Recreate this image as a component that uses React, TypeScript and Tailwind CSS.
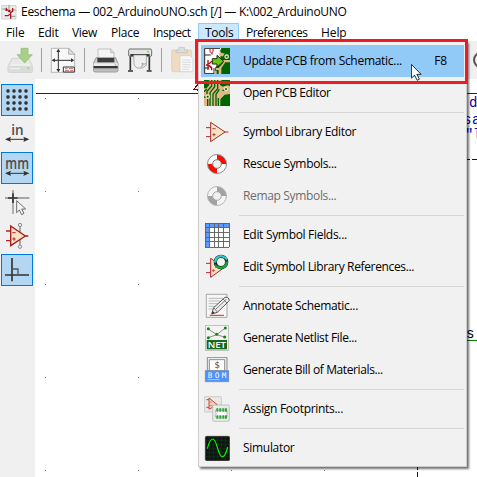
import React from "react";

type DrawProps = { view: string; children: React.ReactNode; big?: boolean; crisp?: boolean };

function Draw({ view, children, big, crisp }: DrawProps) {
  return (
    <svg
      viewBox={view}
      className={big ? "block size-[32px] shrink-0" : "block size-[26px] shrink-0"}
      fill="none"
      shapeRendering={crisp ? "crispEdges" : undefined}
    >
      {children}
    </svg>
  );
}

/* ---------- menu icons ---------- */

const UpdatePcb = () => (
  <Draw view="42 36 78 78">
    <path d="M42 36h54v78h-54z" fill="#fff" />
    <path d="M44 37v76h28M44 37h46M44 57h18M44 96h13M72 96v17" stroke="#222" strokeWidth="3" />
    <path d="M60 38v9q5 8 9 0v-9M66 50v6" stroke="#b00c14" strokeWidth="3" />
    <path d="M54 72v30M48 87h8M56 84l10-8M56 88l9 9v6M60 90l6 6" stroke="#b00c14" strokeWidth="4" />
    <path d="M94 36h26v78h-46l2-20 16-14-2-34z" fill="#006400" />
    <path d="M89 44l7 8h8l-5 9H87zM78 96h8l14-16v-8h20v7h-14L94 96v18h-8V102h-8z" fill="#deb887" />
    <path d="M74 104h6v10h-6z" fill="#deb887" />
    <circle cx="110" cy="62" r="5" fill="#006400" stroke="#f1dfbd" strokeWidth="4" />
    <path d="M67 68h14V58l20 18-20 18V84H67z" fill="#68c90a" stroke="#192b0c" strokeWidth="3" />
  </Draw>
);

const OpenPcb = () => (
  <Draw view="42 132 78 78">
    <path d="M42 132h78v78h-78z" fill="#deb887" />
    <path d="M42 132h16v15l-8 10h-8zM96 132h24v18l-8-2-14 4-8-5v-10zM120 174v36H91v-20l13-14z" fill="#006400" />
    <path d="M65 132v18L51 166v10M74 132v20L60 170v40M83 132v26L69 174v36M88 160l-10 15v35M42 167l8-8M97 163h8M53 186v24M42 183h6M85 186v24" stroke="#006400" strokeWidth="4" />
    <circle cx="108" cy="159" r="5" fill="#006400" stroke="#f1e2c4" strokeWidth="4" />
    <circle cx="53" cy="182" r="5" fill="#006400" stroke="#f1e2c4" strokeWidth="4" />
  </Draw>
);

const OpAmp = () => (
  <Draw view="27 12 78 78">
    <path d="M33 38h14M33 65h14M89 51h11" stroke="#b2222a" strokeWidth="3" />
    <path d="M47 22v58l43-29z" fill="#f7e3c4" stroke="#a52a2a" strokeWidth="3" />
    <path d="M52 41h10M52 59h10M57 54v10" stroke="#b2222a" strokeWidth="2.5" />
  </Draw>
);

const Buoy = ({ gray }: { gray?: boolean }) => {
  const c = gray ? "#a2a2a2" : "#ff0a00";
  const line = gray ? "#a9a9a9" : "#777";
  return (
    <Draw view="27 108 78 78">
      <circle cx="66" cy="147" r="28" fill={gray ? "#f4f4f4" : "#fff"} />
      <path d="M66 119a28 28 0 0 1 28 28H79A13 13 0 0 0 66 134zM66 175a28 28 0 0 1-28-28H53A13 13 0 0 0 66 160z" fill={c} />
      <circle cx="66" cy="147" r="28.5" stroke={line} strokeWidth="2.5" />
      <circle cx="66" cy="147" r="13" fill="#f0f0f0" stroke={line} strokeWidth="3" />
    </Draw>
  );
};

const Fields = () => (
  <Draw view="27 21 78 78" crisp>
    <path d="M31 25h71v71H31z" fill="#fff" />
    <path d="M31 25h71v12H31zM31 25h12v71H31z" fill="#5b98ff" />
    <path d="M31 25h71v71H31zM43 25v71M57 25v71M71 25v71M85 25v71M31 38h71M31 52h71M31 66h71M31 80h71" stroke="#606060" strokeWidth="2.8" />
  </Draw>
);

const References = () => (
  <Draw view="27 117 78 78">
    <path d="M33 145h14M33 173h14" stroke="#b2222a" strokeWidth="3" />
    <path d="M47 130v57l40-29z" fill="#f7e3c4" stroke="#b2222a" strokeWidth="3" />
    <path d="M50 167h10M55 162v10" stroke="#b2222a" strokeWidth="2" />
    <circle cx="78" cy="141" r="17" fill="#f2f2f2" stroke="#222" strokeWidth="10" />
    <path d="M61 143a17 17 0 0 1 28-15" stroke="#2cc9c5" strokeWidth="7" />
    <path d="M84 126h12v11z" fill="#2cc9c5" />
    <path d="M95 139a17 17 0 0 1-28 15" stroke="#13a83b" strokeWidth="7" />
    <path d="M61 146v13h12z" fill="#13a83b" />
  </Draw>
);

const Annotate = () => (
  <Draw view="27 234 78 78">
    <path d="M34 238h62v69H34z" fill="#f7f7f7" stroke="#999" strokeWidth="2.5" />
    <path d="M41 250h43M41 258h34M41 266h28M41 274h20M41 282h12" stroke="#aaa" strokeWidth="2.5" />
    <path d="M44 301h43" stroke="#ff1717" strokeWidth="3" />
    <path d="M50 297l6-19 34-31q7-3 12 5 2 4-1 7l-34 33z" fill="#eee" stroke="#555" strokeWidth="3" />
    <path d="M56 278l12 14M62 283l32-30M84 252l12 12" stroke="#666" strokeWidth="2.5" />
    <path d="M50 297l3-9 6 6z" fill="#333" />
  </Draw>
);

const Netlist = () => (
  <Draw view="27 15 78 78">
    <rect x="31" y="17" width="70" height="74" fill="#f3f3f1" stroke="#aaa" strokeWidth="2" />
    <path d="M40 27l25 17 26-20M40 53l25-9 23 7" stroke="#777" strokeWidth="2.5" />
    <g fill="#128018">
      <circle cx="40" cy="26" r="4.5" />
      <circle cx="91" cy="24" r="4.5" />
      <circle cx="65" cy="43" r="4.5" />
      <circle cx="40" cy="53" r="4.5" />
      <circle cx="89" cy="51" r="4.5" />
    </g>
    <path d="M35 60h61v28H35z" fill="#166b16" />
    <text x="38" y="84" fill="#fff" fontSize="28" fontWeight="600" textLength="55" lengthAdjust="spacingAndGlyphs" className="font-['Open_Sans',sans-serif]">NET</text>
  </Draw>
);

const Bom = () => (
  <Draw view="27 111 78 78">
    <path d="M37 112h59v42H37z" fill="#eee" stroke="#777" strokeWidth="2.5" />
    <path d="M43 119h46v34H43z" fill="#fff" stroke="#777" strokeWidth="2.5" />
    <text x="66" y="144" textAnchor="middle" fill="#444" fontSize="28" className="font-['DejaVu_Sans_Mono',monospace]">$</text>
    <path d="M31 152h70v33H31z" fill="#4f91fb" stroke="#667fa9" strokeWidth="2" />
    <text x="38" y="174" fill="#fff" fontSize="23" textLength="56" className="font-['DejaVu_Sans_Mono',monospace]">BOM</text>
    <path d="M38 179h35" stroke="#e0ebff" strokeWidth="2" />
  </Draw>
);

const Footprints = () => (
  <Draw view="27 228 78 78">
    <rect x="28" y="230" width="51" height="46" rx="2" fill="#e8e8e6" stroke="#bbb" strokeWidth="2" />
    <path d="M34 239h8M34 262h8M42 234v34l25-14z" fill="#f0d1b8" stroke="#c4493c" strokeWidth="3" />
    <path d="M44 246h6M44 257h8" stroke="#c4493c" strokeWidth="2" />
    <rect x="53" y="255" width="50" height="49" rx="4" fill="#e8ebe7" stroke="#aaa" strokeWidth="2" />
    <path d="M61 271h35v20H61v-6q7-4 0-8z" fill="#fff" stroke="#999" strokeWidth="2" />
    <path d="M67 265v10M76 265v10M85 265v10M93 265v10M67 286v10M76 286v10M85 286v10M93 286v10" stroke="#33a13c" strokeWidth="6" />
  </Draw>
);

const Simulator = () => (
  <Draw view="27 345 78 78">
    <rect x="31" y="349" width="73" height="73" rx="4" fill="#101513" stroke="#303333" strokeWidth="2" />
    <path d="M43 350v71M55 350v71M67 350v71M79 350v71M91 350v71M32 362h71M32 374h71M32 386h71M32 398h71M32 410h71" stroke="#153e1c" strokeWidth="1.5" />
    <path d="M37 386c6-23 11-29 16-29 14 0 15 53 29 53 7 0 12-12 16-29" stroke="#09f50d" strokeWidth="3.5" />
  </Draw>
);

/* ---------- top toolbar icons ---------- */

const Save = () => (
  <Draw view="21 144 78 78">
    <path d="M36 178h50l11 22v17q0 3-4 3H27q-3 0-3-4v-15z" fill="#e7e8e7" stroke="#c3c3c3" strokeWidth="2" />
    <path d="M26 200h69v18H26z" fill="#dadcd9" />
    <path d="M31 198h60M30 209h30" stroke="#f6f6f6" strokeWidth="3" />
    <circle cx="85" cy="208" r="3" fill="#9fcf8e" />
    <path d="M63 148h21v19h13l-23 25-23-25h12z" fill="#a7d087" stroke="#93b77b" strokeWidth="2" />
  </Draw>
);

const PageSetup = () => (
  <Draw view="150 144 78 78">
    <path d="M154 148h52l18 18v54h-70z" fill="#f8f8f8" stroke="#999" strokeWidth="2" />
    <path d="M206 148c1 8-2 14 0 18 7-1 12 1 18 0z" fill="#ddd" stroke="#999" strokeWidth="2" />
    <path d="M175 155v60M160 184h58" stroke="#333" strokeWidth="3" />
    <path d="M175 149l-6 10h12zM175 220l-6-10h12zM155 184l10-6v12zM223 184l-10-6v12z" fill="#333" />
    <path d="M190 204h33v15h-33z" fill="#fff" stroke="#333" strokeWidth="3" />
    <path d="M195 209h8m4 0h12M195 215h12m4 0h8" stroke="#a02020" strokeWidth="2" />
  </Draw>
);

const Printer = () => (
  <Draw view="279 144 78 78">
    <path d="M294 186v-36h38l10 10v26z" fill="#f4f4f4" stroke="#aaa" strokeWidth="2" />
    <path d="M332 150v11h10" fill="#ddd" stroke="#aaa" strokeWidth="2" />
    <path d="M288 176h59l7 18v20q0 5-6 5h-61q-7 0-7-6v-20z" fill="#ccc" stroke="#777" strokeWidth="2" />
    <path d="M292 177h51v13h-51z" fill="#3c3c3c" />
    <path d="M281 193h72v8h-72z" fill="#ededed" />
    <path d="M281 201h72v7h-72z" fill="#373737" />
    <path d="M283 210h69v5h-69z" fill="#b9b9b9" />
    <circle cx="347" cy="198" r="2.5" fill="#59e833" />
  </Draw>
);

const Plotter = () => (
  <Draw view="381 144 78 78">
    <path d="M391 166v48M448 166v48" stroke="#333" strokeWidth="5" />
    <path d="M384 218v-4h15v4M440 218v-4h15v4" fill="#333" />
    <rect x="386" y="150" width="69" height="22" rx="4" fill="#e5e5e3" stroke="#555" strokeWidth="2.5" />
    <path d="M391 165h58v6h-58z" fill="#383838" />
    <circle cx="444" cy="158" r="3" fill="#5df725" />
    <path d="M401 168h38v31l-12 8h-15q-9-3-10-12z" fill="#eee" stroke="#888" strokeWidth="2" />
    <path d="M422 206c5-4 6-8 4-13 6 3 10 2 13 0" fill="#ccc" stroke="#888" strokeWidth="2" />
  </Draw>
);

const Paste = () => (
  <Draw view="510 144 78 78">
    <rect x="515" y="153" width="60" height="65" rx="4" fill="#efdcc0" stroke="#ddc9ab" strokeWidth="2" />
    <path d="M528 161v-8h9v-8h16v8h9v8z" fill="#ddd" stroke="#bcbcbc" strokeWidth="2" />
    <path d="M540 170h30l9 9v39h-39z" fill="#f8f8f8" stroke="#ccc" strokeWidth="2" />
    <path d="M547 183h24M547 190h26M547 197h24M547 204h26M547 211h20" stroke="#ccc" strokeWidth="2" />
  </Draw>
);

/* ---------- left toolbar icons ---------- */

const GridIcon = () => (
  <Draw view="3 12 96 96" big>
    {[33, 51, 69, 87].map((y) =>
      [24, 42, 60, 78].map((x) => <rect key={`${x}-${y}`} x={x - 5} y={y - 5} width="10" height="10" rx="4" fill="#333" />)
    )}
  </Draw>
);

const UnitIcon = ({ unit }: { unit: "in" | "mm" }) => (
  <Draw view="3 114 96 96" big>
    <text
      x={unit === "in" ? 34 : 16}
      y={unit === "in" ? 164 : 165}
      fill="#4c4c4c"
      fontSize={unit === "in" ? 42 : 46}
      textLength={unit === "in" ? 37 : 71}
      lengthAdjust="spacingAndGlyphs"
      className="font-['Open_Sans',sans-serif] font-semibold"
    >
      {unit}
    </text>
    <path d="M20 178h62" stroke="#333" strokeWidth="3" />
    <path d="M15 178l18-8-3 8 3 8zM88 178l-18-8 3 8-3 8z" fill="#333" />
  </Draw>
);

const CursorIcon = () => (
  <Draw view="3 18 96 96" big>
    <path d="M15 54h73M39 30v72" stroke="#8d8d8d" strokeWidth="4" />
    <path d="M24 54h29M39 40v29" stroke="#333" strokeWidth="5" />
    <path d="M50 62v36l8-8 7 14 7-4-7-13h12z" fill="#f3f3f3" stroke="#555" strokeWidth="2.5" />
  </Draw>
);

const HiddenPins = () => (
  <Draw view="3 120 96 96" big>
    <path d="M60 140v56" stroke="#999" strokeWidth="5" />
    <circle cx="60" cy="135" r="5" fill="#f0f0f0" stroke="#888" strokeWidth="3" />
    <circle cx="60" cy="200" r="5" fill="#f0f0f0" stroke="#888" strokeWidth="3" />
    <path d="M18 153h14M18 182h14M75 168h10" stroke="#b2222a" strokeWidth="4" />
    <path d="M32 138v59l44-29z" fill="#f7e3c4" stroke="#a81d22" strokeWidth="4" />
    <path d="M37 158h10M37 177h10M42 172v10" stroke="#b2222a" strokeWidth="3" />
  </Draw>
);

const Ortho = () => (
  <Draw view="3 222 96 96" big>
    <path d="M36 234v70M15 285h72" stroke="#333" strokeWidth="5" />
    <path d="M38 267h16v16" stroke="#555" strokeWidth="4" />
  </Draw>
);

/* ---------- building blocks ---------- */

function Tool({ active, children }: { active?: boolean; children: React.ReactNode }) {
  return (
    <div className={active ? "size-8 bg-[#b3d7f3] outline outline-1 -outline-offset-1 outline-[#0078d7]" : "size-8"}>
      {children}
    </div>
  );
}

type ItemProps = {
  icon: React.ReactNode;
  label: string;
  spacing: string;
  shortcut?: string;
  active?: boolean;
  disabled?: boolean;
};

function Item({ icon, label, spacing, shortcut, active, disabled }: ItemProps) {
  return (
    <div className={`flex h-8 items-center pl-[3px] pr-[17px] ${active ? "bg-[#91c9f7]" : ""} ${disabled ? "text-[#6d6d6d]" : ""}`}>
      {icon}
      <span className={`ml-[13px] whitespace-nowrap ${spacing}`}>{label}</span>
      {shortcut && <span className="ml-auto tracking-[-0.2px]">{shortcut}</span>}
    </div>
  );
}

const Separator = () => (
  <div className="ml-[38px] flex h-[7px] items-center">
    <div className="h-px w-full bg-[#d7d7d7]" />
  </div>
);
const Divider = () => <div className="h-6 w-px bg-[#a0a0a0]" />;

const menus: [string, string][] = [
  ["File", "w-8 tracking-[-0.1px]"],
  ["Edit", "w-[34px] tracking-[-0.2px]"],
  ["View", "w-[39px] tracking-[-0.3px]"],
  ["Place", "w-[42px] tracking-[-0.2px]"],
  ["Inspect", "w-[45px] tracking-[-0.4px]"],
];

export default function App() {
  return (
    <div className="relative flex h-[477px] w-[477px] flex-col overflow-hidden bg-white font-['Open_Sans','Noto_Sans',sans-serif] text-[12px] leading-4 text-black">
      <header className="flex h-[23px] shrink-0 items-center pl-[1px]">
        <svg viewBox="3 6 48 48" className="size-4" fill="none">
          <path d="M5 11h43v40H5z" fill="#eee" stroke="#bbb" strokeWidth="2" />
          <path d="M27 10v14M7 21h10M34 24h12M30 43h16" stroke="#4b7550" strokeWidth="2" />
          <path d="M19 17v10M16 24h8M38 18v10l-8 5M14 41h10l8-6M32 34v16" stroke="#a51b23" strokeWidth="4" />
          <circle cx="28" cy="27" r="4" fill="#c00" />
        </svg>
        <h1 className="ml-1 whitespace-nowrap tracking-[-0.29px]">Eeschema — 002_ArduinoUNO.sch [/] — K:\002_ArduinoUNO</h1>
      </header>

      <nav className="flex h-[18px] shrink-0 pl-1.5">
        {menus.map(([name, style]) => (
          <span key={name} className={`h-[18px] whitespace-nowrap pt-[2px] ${style}`}>{name}</span>
        ))}
        <span className="h-[18px] w-[41px] border border-[#91c9f7] bg-[#cce8ff] pl-[6px] pt-px tracking-[-0.3px]">Tools</span>
        <span className="ml-[7px] w-[75px] pt-[2px] tracking-[-0.5px]">Preferences</span>
        <span className="pt-[2px] tracking-[-0.1px]">Help</span>
      </nav>

      <div className="flex h-[38px] shrink-0 items-center bg-[#f0f0f0] pl-[7px]">
        <Save />
        <div className="ml-2"><Divider /></div>
        <div className="ml-2"><PageSetup /></div>
        <div className="ml-2"><Divider /></div>
        <div className="ml-2"><Printer /></div>
        <div className="ml-2"><Plotter /></div>
        <div className="ml-2"><Divider /></div>
        <div className="ml-2"><Paste /></div>
        <div className="ml-[277px] size-4 shrink-0 rounded-full border-2 border-[#555]" />
      </div>

      <div className="flex flex-1">
        <aside className="flex w-[35px] flex-col gap-0.5 bg-[#f0f0f0] pl-px pt-[5px]">
          <Tool active><GridIcon /></Tool>
          <Tool><UnitIcon unit="in" /></Tool>
          <Tool active><UnitIcon unit="mm" /></Tool>
          <Tool><CursorIcon /></Tool>
          <Tool><HiddenPins /></Tool>
          <Tool active><Ortho /></Tool>
        </aside>
        {/* Schematic canvas */}
        <main className="relative flex-1 overflow-hidden bg-white font-['Liberation_Mono',monospace] text-[#0000b4]">
          <svg viewBox="35 79 442 398" className="absolute inset-0 h-full w-full" fill="none" shapeRendering="crispEdges">
            <path d="M36 93h441v1H36z" fill="#840000" />
            <path d="M197.5 82v3l-4 4.5h5M197.5 89v2" stroke="#840000" />
            {[98, 191, 284, 377, 470].map((y) =>
              [45, 138, 231, 324].map((x) => <path key={`${x}-${y}`} d={`M${x} ${y}h1v1h-1z`} fill="#777" />)
            )}
            <path d="M467 159.5h3m2 0h5" stroke="#0000b4" />
            <path d="M417.5 467v3m0 2v5" stroke="#0000b4" />
            <path d="M467 340.5h10" stroke="#008400" />
          </svg>
          <span className="absolute left-[434px] top-[16px] text-[14px]">d</span>
          <span className="absolute left-[428px] top-[33px] text-[14px]">s</span>
          <span className="absolute left-[437px] top-[33px] text-[14px]">a</span>
          <span className="absolute left-[430px] top-[48px] text-[14px]">"</span>
          <span className="absolute left-[438px] top-[48px] text-[14px]">l</span>
          <span className="absolute left-[431px] top-[247px] text-[14px] text-black">s</span>
        </main>
      </div>

      {/* Open Tools menu */}
      <div className="absolute left-[198px] top-[41px] h-[426px] w-[269px] border border-[#ccc] bg-[#f1f1f1] px-[2px] pt-[3px] shadow-[2px_2px_2px_rgba(0,0,0,0.55)]">
        <Item active icon={<UpdatePcb />} label="Update PCB from Schematic..." spacing="tracking-[-0.29px]" shortcut="F8" />
        <Item icon={<OpenPcb />} label="Open PCB Editor" spacing="tracking-[-0.36px]" />
        <Separator />
        <Item icon={<OpAmp />} label="Symbol Library Editor" spacing="tracking-[-0.33px]" />
        <Item icon={<Buoy />} label="Rescue Symbols..." spacing="tracking-[-0.34px]" />
        <Item disabled icon={<Buoy gray />} label="Remap Symbols..." spacing="tracking-[-0.34px]" />
        <Separator />
        <Item icon={<Fields />} label="Edit Symbol Fields..." spacing="tracking-[-0.31px]" />
        <Item icon={<References />} label="Edit Symbol Library References..." spacing="tracking-[-0.35px]" />
        <Separator />
        <Item icon={<Annotate />} label="Annotate Schematic..." spacing="tracking-[-0.3px]" />
        <Item icon={<Netlist />} label="Generate Netlist File..." spacing="tracking-[-0.38px]" />
        <Item icon={<Bom />} label="Generate Bill of Materials..." spacing="tracking-[-0.38px]" />
        <Separator />
        <Item icon={<Footprints />} label="Assign Footprints..." spacing="tracking-[-0.3px]" />
        <Separator />
        <Item icon={<Simulator />} label="Simulator" spacing="tracking-[-0.3px]" />
      </div>

      {/* Highlight frame and pointer */}
      <div className="absolute left-[195px] top-[39px] h-[45px] w-[273px] border-[3px] border-[#ed1c24]" />
      <svg viewBox="0 0 14 20" className="absolute left-[411px] top-[64px] h-[17px] w-[12px]" preserveAspectRatio="xMinYMin slice">
        <path d="M.5 .5v16l3.7-3.5 3 6 2.6-1.3-3-5.7h5z" fill="#fff" stroke="#111" />
      </svg>
    </div>
  );
}
